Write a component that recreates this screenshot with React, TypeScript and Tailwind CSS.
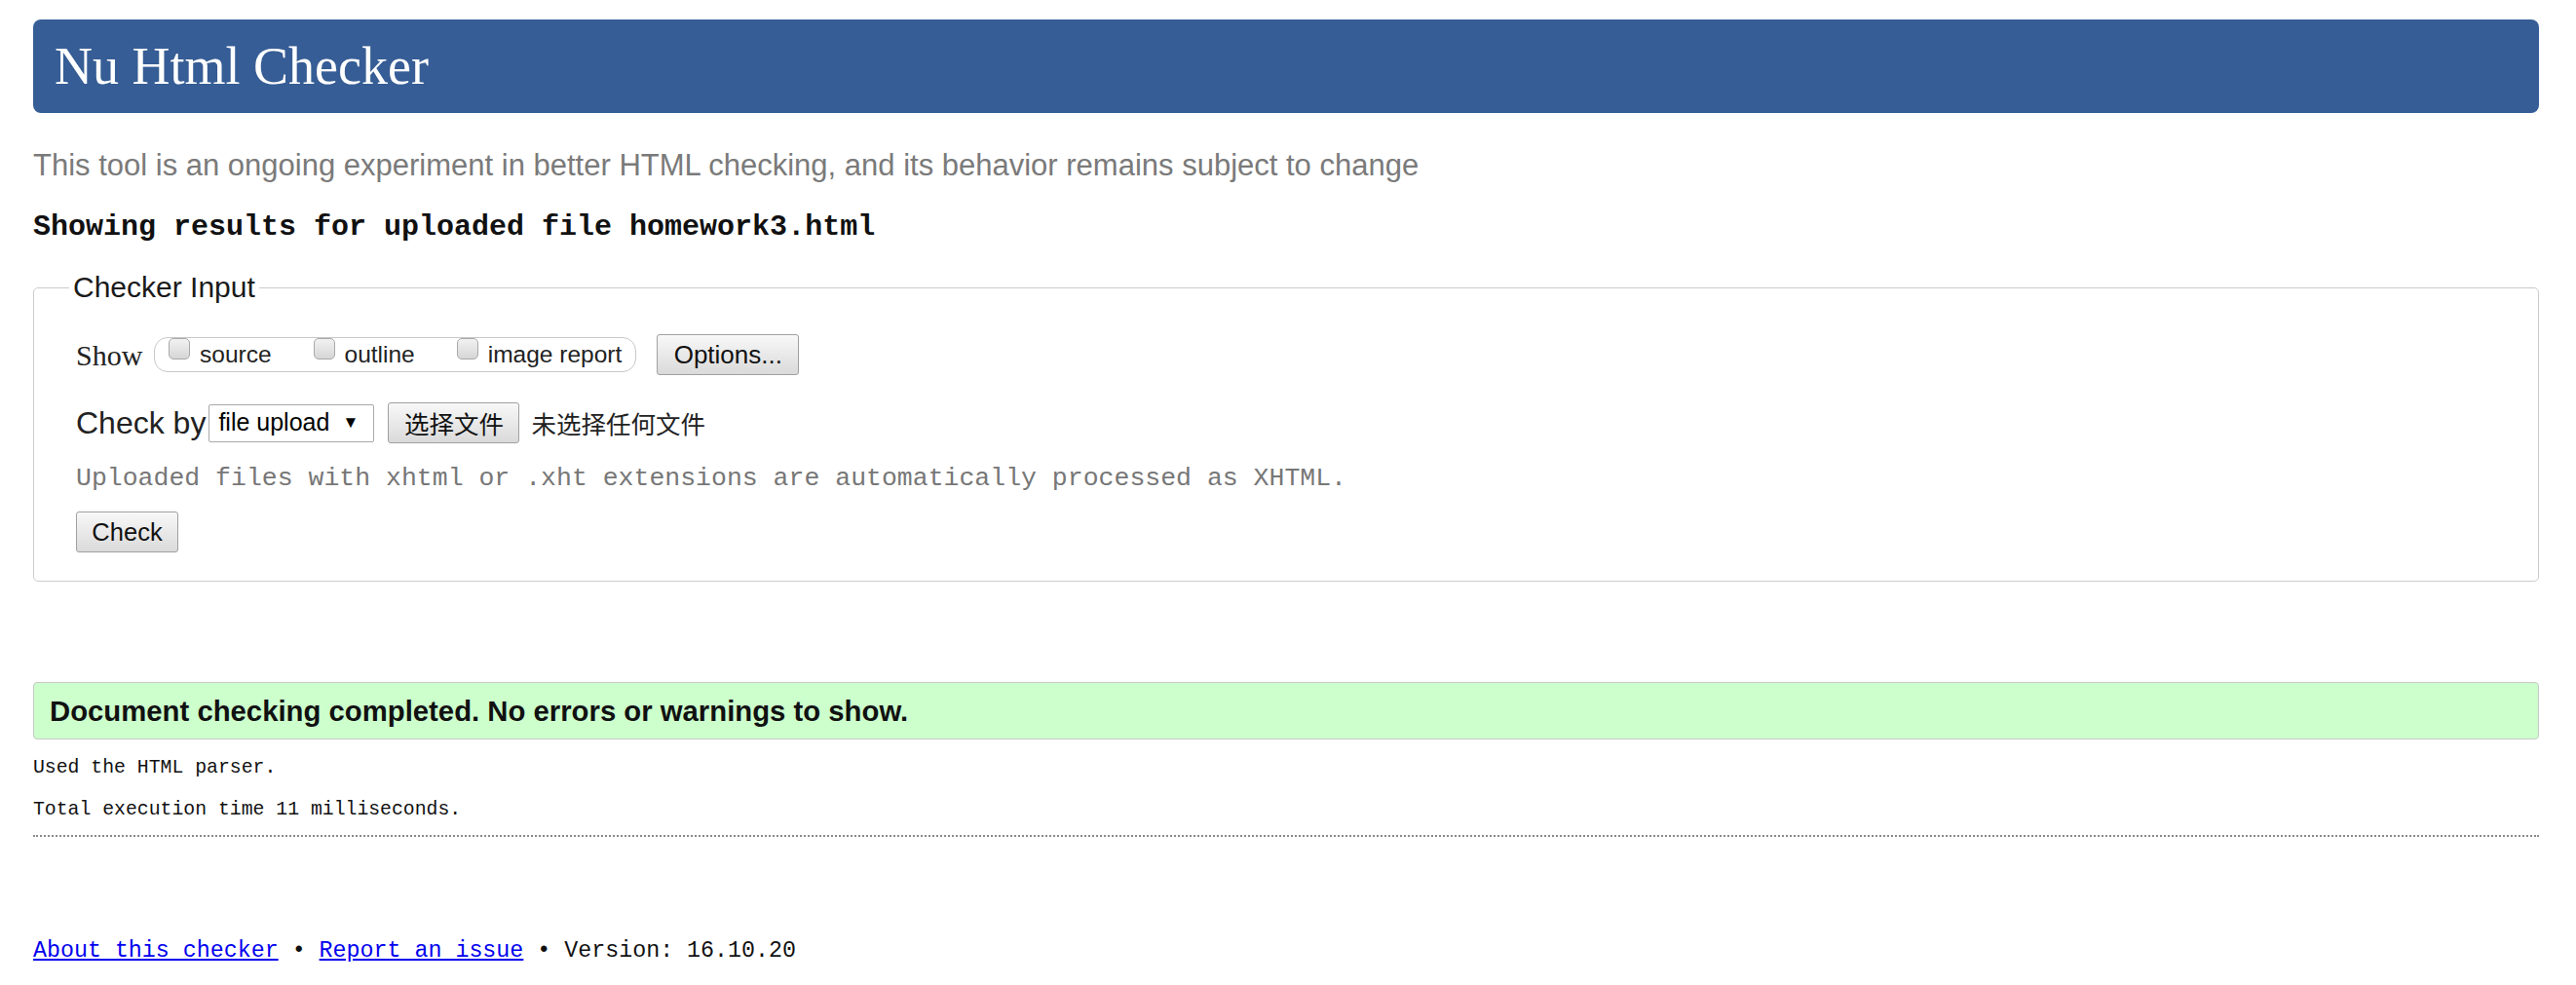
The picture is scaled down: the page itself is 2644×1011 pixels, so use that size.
const mono = "font-['Liberation_Mono',monospace]";
const cjk = "font-['Noto_Sans_CJK_SC',sans-serif]";
const btn =
  "rounded-[3px] border border-[#a0a0a0] bg-linear-to-b from-[#f8f8f8] to-[#dadada] text-[#111]";
const box =
  "mr-[10px] h-[22px] w-[22px] -translate-y-[6px] appearance-none rounded-[5px] border border-[#a9a9a9] bg-linear-to-b from-[#f2f2f2] to-[#d6d6d6]";

export default function App() {
  return (
    <div className="min-h-screen bg-white pl-[34px] pr-[38px] pt-[20px] font-['Liberation_Sans',Arial,sans-serif] text-black">
      <header className="flex h-[96px] items-center rounded-[8px] bg-[#365d95] pl-[22px]">
        <h1 className="font-['Liberation_Serif',serif] text-[54px] font-normal leading-normal text-white">
          Nu Html Checker
        </h1>
      </header>

      <p className="mt-[34px] flex h-[40px] items-center text-[31px] text-[#7a7a7a]">
        This tool is an ongoing experiment in better HTML checking, and its behavior remains subject to change
      </p>
      <p className={`mt-[23px] flex h-[40px] items-center ${mono} text-[30px] font-bold text-[#111]`}>
        Showing results for uploaded file homework3.html
      </p>

      <fieldset className="mt-[25px] rounded-[5px] border border-[#cccccc] pb-[29px] pl-[43px] pt-[31px]">
        <legend className="ml-[-7px] h-[34px] px-[4px] text-[30px] leading-[34px] text-[#1a1a1a]">
          Checker Input
        </legend>

        <div className="flex h-[42px] items-center">
          <span className="w-[80px] font-['Liberation_Serif',serif] text-[30px] text-[#222]">Show</span>
          <div className="flex h-[36px] items-center gap-[43px] rounded-[14px] border border-[#c8c8c8] px-[14px] text-[24.5px] text-[#222]">
            <label className="flex items-center">
              <input type="checkbox" className={box} />
              source
            </label>
            <label className="flex items-center">
              <input type="checkbox" className={box} />
              outline
            </label>
            <label className="flex items-center">
              <input type="checkbox" className={box} />
              image report
            </label>
          </div>
          <button className={`ml-[21px] h-[42px] w-[146px] text-[26px] ${btn}`}>Options...</button>
        </div>

        <div className="mt-[28px] flex h-[42px] items-center">
          <span className="text-[32px] text-[#222]">Check by</span>
          <div className="ml-[3px] flex h-[39px] w-[170px] items-center justify-between rounded-[2px] border border-[#a9a9a9] pl-[9px] pr-[15px] text-[25px]">
            <span>file upload</span>
            <span className="text-[17px]">▼</span>
          </div>
          <button className={`ml-[14px] h-[42px] w-[135px] ${cjk} text-[25.5px] ${btn}`}>选择文件</button>
          <span className={`ml-[12px] ${cjk} text-[25.5px] text-[#222]`}>未选择任何文件</span>
        </div>

        <p className={`mt-[22px] flex h-[30px] items-center ${mono} text-[26.5px] text-[#777]`}>
          Uploaded files with xhtml or .xht extensions are automatically processed as XHTML.
        </p>

        <button className={`mt-[18px] h-[42px] w-[105px] text-[25.5px] ${btn}`}>Check</button>
      </fieldset>

      <div className="mt-[103px] flex h-[59px] items-center rounded-[4px] border border-[#c8c8c8] bg-[#ccffcc] pl-[16px] text-[29.3px] font-bold text-[#111]">
        Document checking completed. No errors or warnings to show.
      </div>

      <p className={`mt-[18px] flex h-[24px] items-center ${mono} text-[19.8px] text-[#111]`}>
        Used the HTML parser.
      </p>
      <p className={`mt-[19px] flex h-[24px] items-center ${mono} text-[19.8px] text-[#111]`}>
        Total execution time 11 milliseconds.
      </p>
      <div className="mt-[13px] border-t-[2px] border-dotted border-[#8a8a8a]" />

      <p className={`mt-[102px] flex h-[30px] items-center whitespace-pre ${mono} text-[23.3px] text-[#111]`}>
        <a href="#" className="text-[#0000ee] underline">About this checker</a>
        {' • '}
        <a href="#" className="text-[#0000ee] underline">Report an issue</a>
        {' • Version: 16.10.20'}
      </p>
    </div>
  );
}
